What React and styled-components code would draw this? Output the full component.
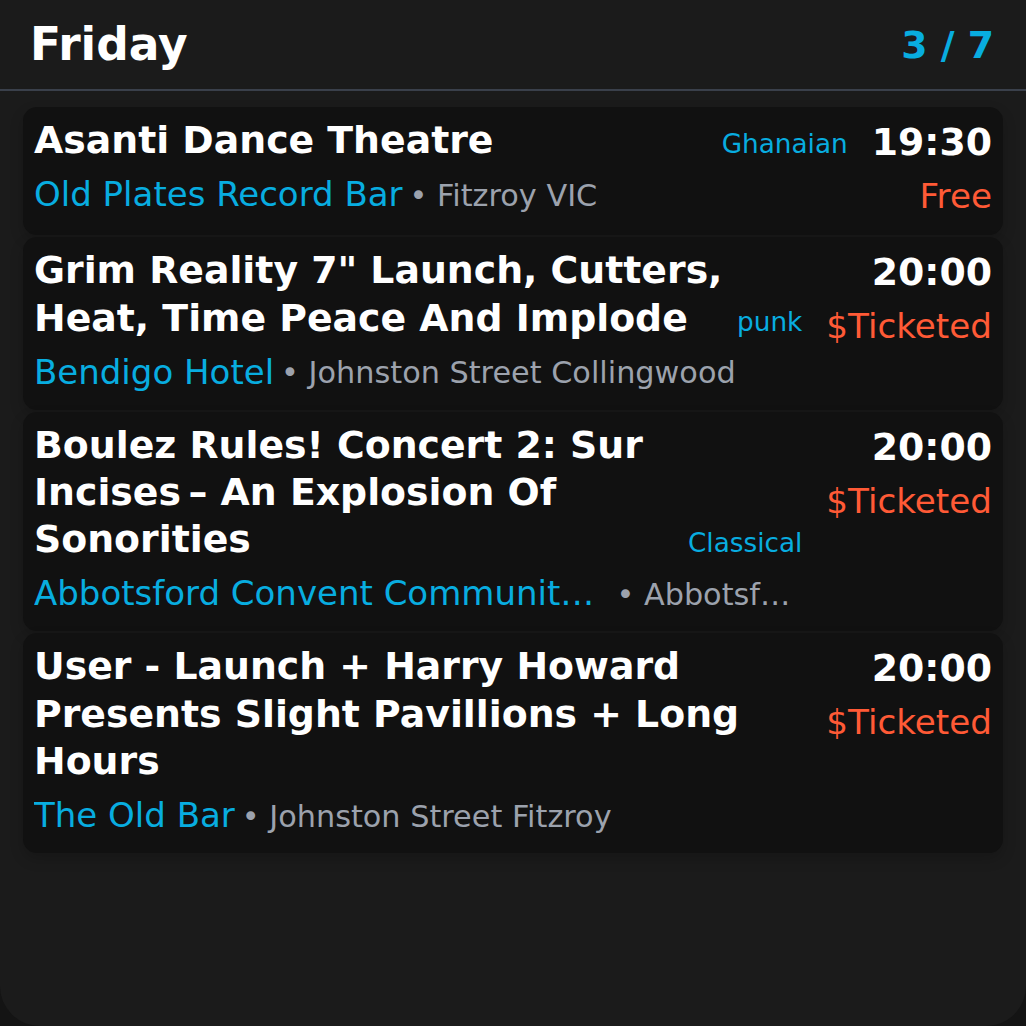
import React from 'react'
import styled, { createGlobalStyle } from 'styled-components'

const GlobalStyle = createGlobalStyle`
  html, body {
    margin: 0;
    padding: 0;
    background: #141414;
  }
  body {
    font-family: 'DejaVu Sans', 'Liberation Sans', sans-serif;
  }
`;

const Screen = styled.div`
  width: 1026px;
  height: 1026px;
  background: #1b1b1b;
  border-radius: 0 0 40px 40px;
  overflow: hidden;
  box-sizing: border-box;
`;

const Header = styled.header`
  height: 89px;
  display: flex;
  align-items: center;
  justify-content: space-between;
  padding: 0 32px 0 30px;
  border-bottom: 2px solid #3a404b;
`;

const Day = styled.h1`
  margin: 0;
  font-size: 45.5px;
  font-weight: bold;
  color: #ffffff;
`;

const Counter = styled.span`
  font-size: 37.8px;
  font-weight: bold;
  color: #08ade0;
`;

const List = styled.div`
  display: flex;
  flex-direction: column;
  gap: 2px;
  padding: 16px 23px;
`;

const Card = styled.article`
  display: flex;
  gap: 24px;
  background: #111111;
  border-radius: 14px;
  padding: 10px 11px 13px;
  box-shadow: 0 6px 14px rgba(0, 0, 0, 0.18);
`;

const Main = styled.div`
  flex: 1;
  min-width: 0;
`;

const TitleRow = styled.div`
  display: flex;
  align-items: last baseline;
  gap: 12px;
`;

const Title = styled.h2`
  flex: 1;
  margin: 0;
  font-size: 37.8px;
  line-height: 1.25;
  font-weight: bold;
  color: #ffffff;
`;

const Genre = styled.span`
  flex: none;
  font-size: 26.3px;
  color: #08ade0;
`;

const VenueRow = styled.div`
  display: flex;
  align-items: flex-end;
  margin-top: 5px;
  white-space: nowrap;
  min-width: 0;
`;

const Venue = styled.span`
  flex: 0 1 auto;
  min-width: 0;
  overflow: hidden;
  text-overflow: ellipsis;
  font-size: 34px;
  line-height: 50px;
  color: #08ade0;
`;

const Place = styled.span`
  flex: 0 0.5 auto;
  min-width: 0;
  overflow: hidden;
  text-overflow: ellipsis;
  margin-left: 7px;
  font-size: 30.3px;
  line-height: 47.4px;
  color: #9ca2ad;
`;

const Side = styled.div`
  flex: none;
  display: flex;
  flex-direction: column;
  align-items: flex-end;
`;

const Time = styled.span`
  font-size: 37.8px;
  line-height: 51px;
  font-weight: bold;
  color: #ffffff;
`;

const Price = styled.span`
  margin-top: 3px;
  font-size: 34.2px;
  line-height: 1.5;
  color: #ff5a36;
`;

const events = [
  {
    title: 'Asanti Dance Theatre',
    genre: 'Ghanaian',
    venue: 'Old Plates Record Bar',
    place: 'Fitzroy VIC',
    time: '19:30',
    price: 'Free',
  },
  {
    title: 'Grim Reality 7" Launch, Cutters, Heat, Time Peace And Implode',
    genre: 'punk',
    venue: 'Bendigo Hotel',
    place: 'Johnston Street Collingwood',
    time: '20:00',
    price: '$Ticketed',
  },
  {
    title: 'Boulez Rules! Concert 2: Sur Incises\u2009– An Explosion Of Sonorities',
    genre: 'Classical',
    venue: 'Abbotsford Convent Community Hall',
    place: 'Abbotsford',
    time: '20:00',
    price: '$Ticketed',
  },
  {
    title: 'User - Launch + Harry Howard Presents Slight Pavillions + Long Hours',
    venue: 'The Old Bar',
    place: 'Johnston Street Fitzroy',
    time: '20:00',
    price: '$Ticketed',
  },
];

const App = () => {
  return (
    <Screen>
      <GlobalStyle />
      <Header>
        <Day>Friday</Day>
        <Counter>3 / 7</Counter>
      </Header>
      <List>
        {events.map((ev) => (
          <Card key={ev.title}>
            <Main>
              <TitleRow>
                <Title>{ev.title}</Title>
                {ev.genre && <Genre>{ev.genre}</Genre>}
              </TitleRow>
              <VenueRow>
                <Venue>{ev.venue}</Venue>
                <Place>• {ev.place}</Place>
              </VenueRow>
            </Main>
            <Side>
              <Time>{ev.time}</Time>
              <Price>{ev.price}</Price>
            </Side>
          </Card>
        ))}
      </List>
    </Screen>
  );
};

export default App
